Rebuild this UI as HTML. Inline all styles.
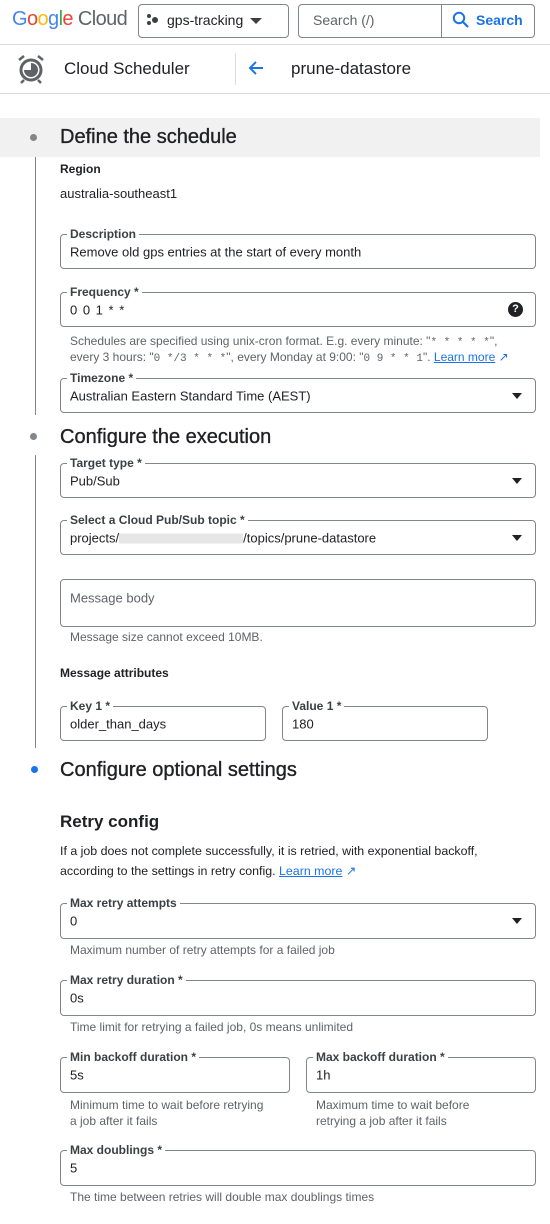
<!DOCTYPE html>
<html><head><meta charset="utf-8"><style>
*{box-sizing:border-box;margin:0;padding:0}
body{width:550px;height:1224px;background:#fff;font-family:"Liberation Sans",Arial,sans-serif;color:#202124;position:relative;overflow:hidden}
.a{position:absolute;white-space:nowrap}
.f{position:absolute;border:1px solid #80868b;border-radius:4px;background:#fff}
.f .l{position:absolute;top:-9px;left:6px;padding:0 3px;background:#fff;font-size:12px;font-weight:bold;color:#3c4043;line-height:16px}
.f .v{position:absolute;left:9px;top:50%;transform:translateY(-50%);font-size:13px;color:#202124}
.tri{position:absolute;right:13px;top:50%;margin-top:-3px;width:0;height:0;border-left:5px solid transparent;border-right:5px solid transparent;border-top:6px solid #202124}
.h{font-size:12px;color:#5f6368}
.sec{font-size:20px;color:#202124;-webkit-text-stroke:0.35px #202124}
.dot{position:absolute;width:7px;height:7px;border-radius:50%;background:#80868b}
.vl{position:absolute;left:35px;width:1px;background:#80868b}
.lk{color:#1a73e8;text-decoration:underline}
.mono{font-family:"Liberation Mono",monospace;font-size:11px}
</style></head><body>
<div class="a" style="left:12px;top:8px;font-size:20px;letter-spacing:-0.6px"><span style="color:#4285f4">G</span><span style="color:#ea4335">o</span><span style="color:#fbbc04">o</span><span style="color:#4285f4">g</span><span style="color:#34a853">l</span><span style="color:#ea4335">e</span> <span style="color:#5f6368">Cloud</span></div>
<div class="a" style="left:138px;top:4px;width:151px;height:34px;border:1px solid #80868b;border-radius:4px"></div>
<div class="a" style="left:146px;top:13px;width:14px;height:14px"><svg width="14" height="14"><circle cx="3" cy="3" r="2" fill="#3c4043"/><circle cx="3" cy="10" r="2" fill="#3c4043"/><circle cx="9" cy="7" r="3" fill="#3c4043"/></svg></div>
<div class="a" style="left:167px;top:12px;font-size:14px;color:#202124">gps-tracking</div>
<div class="a" style="left:250px;top:18px;border-left:6px solid transparent;border-right:6px solid transparent;border-top:6px solid #3c4043"></div>
<div class="a" style="left:298px;top:4px;width:237px;height:34px;border:1px solid #80868b;border-radius:4px"></div>
<div class="a" style="left:441px;top:4px;width:1px;height:34px;background:#80868b"></div>
<div class="a" style="left:313px;top:12px;font-size:14px;color:#5f6368">Search (/)</div>
<div class="a" style="left:452px;top:11px"><svg width="18" height="18" viewBox="0 0 18 18"><circle cx="7" cy="7" r="5.2" fill="none" stroke="#1a73e8" stroke-width="2"/><path d="M11 11l5 5" stroke="#1a73e8" stroke-width="2.2"/></svg></div>
<div class="a" style="left:476px;top:12px;font-size:14px;font-weight:bold;color:#1a73e8">Search</div>
<div class="a" style="left:0;top:44px;width:550px;height:1px;background:#dadce0"></div>
<div class="a" style="left:16px;top:53px"><svg width="30" height="32" viewBox="0 0 30 32"><circle cx="15" cy="17" r="10" fill="none" stroke="#5f6368" stroke-width="3"/><path d="M15 17V10A7 7 0 1 1 8 17z" fill="#5f6368"/><path d="M3 7l5-4M27 7l-5-4M8 27l-3 3M22 27l3 3" stroke="#5f6368" stroke-width="2.5"/></svg></div>
<div class="a" style="left:64px;top:59px;font-size:17px">Cloud Scheduler</div>
<div class="a" style="left:235px;top:53px;width:1px;height:32px;background:#dadce0"></div>
<div class="a" style="left:247px;top:59px"><svg width="18" height="18" viewBox="0 0 18 18"><path d="M16 9H3M9 3L3 9l6 6" fill="none" stroke="#1a73e8" stroke-width="2"/></svg></div>
<div class="a" style="left:291px;top:59px;font-size:17px">prune-datastore</div>
<div class="a" style="left:0;top:93px;width:550px;height:1px;background:#dadce0"></div>

<div class="a" style="left:0;top:118px;width:540px;height:39px;background:#f1f1f1"></div>
<div class="dot" style="left:30px;top:134px"></div>
<div class="a sec" style="left:60px;top:126px">Define the schedule</div>
<div class="vl" style="top:157px;height:258px"></div>
<div class="a" style="left:60px;top:162px;font-size:12px;font-weight:bold">Region</div>
<div class="a" style="left:60px;top:186px;font-size:13px">australia-southeast1</div>

<div class="f" style="left:60px;top:234px;width:476px;height:35px"><div class="l">Description</div><div class="v">Remove old gps entries at the start of every month</div></div>
<div class="f" style="left:60px;top:292px;width:476px;height:35px"><div class="l">Frequency *</div><div class="v" style="letter-spacing:1px">0 0 1 * *</div>
<div style="position:absolute;right:12px;top:9px;width:15px;height:15px;border-radius:50%;background:#202124;color:#fff;font-size:11px;font-weight:bold;text-align:center;line-height:15px">?</div></div>
<div class="a h" style="left:70px;top:334px">Schedules are specified using unix-cron format. E.g. every minute: "<span class="mono">* * * * *</span>",</div>
<div class="a h" style="left:70px;top:350px">every 3 hours: "<span class="mono">0 */3 * * *</span>", every Monday at 9:00: "<span class="mono">0 9 * * 1</span>". <span class="lk">Learn more</span> <span style="color:#1a73e8">↗</span></div>
<div class="f" style="left:60px;top:378px;width:476px;height:35px"><div class="l">Timezone *</div><div class="v">Australian Eastern Standard Time (AEST)</div><div class="tri"></div></div>

<div class="dot" style="left:30px;top:433px"></div>
<div class="a sec" style="left:60px;top:426px">Configure the execution</div>
<div class="vl" style="top:455px;height:293px"></div>
<div class="f" style="left:60px;top:463px;width:476px;height:35px"><div class="l">Target type *</div><div class="v">Pub/Sub</div><div class="tri"></div></div>
<div class="f" style="left:60px;top:520px;width:476px;height:35px"><div class="l">Select a Cloud Pub/Sub topic *</div><div class="v">projects/<span style="display:inline-block;width:124px;height:10px;background:#e6e6e6;vertical-align:middle"></span>/topics/prune-datastore</div><div class="tri"></div></div>
<div class="f" style="left:60px;top:579px;width:476px;height:48px"><div class="v" style="top:18px;color:#5f6368">Message body</div></div>
<div class="a h" style="left:70px;top:630px">Message size cannot exceed 10MB.</div>
<div class="a" style="left:60px;top:666px;font-size:12px;font-weight:bold">Message attributes</div>
<div class="f" style="left:60px;top:706px;width:206px;height:35px"><div class="l">Key 1 *</div><div class="v">older_than_days</div></div>
<div class="f" style="left:282px;top:706px;width:206px;height:35px"><div class="l">Value 1 *</div><div class="v">180</div></div>

<div class="dot" style="left:31px;top:766px;background:#1a73e8"></div>
<div class="a sec" style="left:60px;top:759px">Configure optional settings</div>
<div class="a" style="left:60px;top:812px;font-size:17px;font-weight:bold;color:#202124">Retry config</div>
<div class="a" style="left:60px;top:844px;font-size:12.4px">If a job does not complete successfully, it is retried, with exponential backoff,</div>
<div class="a" style="left:60px;top:863px;font-size:12.4px">according to the settings in retry config. <span class="lk">Learn more</span> <span style="color:#1a73e8">↗</span></div>
<div class="f" style="left:60px;top:903px;width:476px;height:36px"><div class="l">Max retry attempts</div><div class="v">0</div><div class="tri"></div></div>
<div class="a h" style="left:70px;top:943px">Maximum number of retry attempts for a failed job</div>
<div class="f" style="left:60px;top:980px;width:476px;height:36px"><div class="l">Max retry duration *</div><div class="v">0s</div></div>
<div class="a h" style="left:70px;top:1020px">Time limit for retrying a failed job, 0s means unlimited</div>
<div class="f" style="left:60px;top:1057px;width:230px;height:36px"><div class="l">Min backoff duration *</div><div class="v">5s</div></div>
<div class="f" style="left:306px;top:1057px;width:230px;height:36px"><div class="l">Max backoff duration *</div><div class="v">1h</div></div>
<div class="a h" style="left:70px;top:1097px;line-height:16px">Minimum time to wait before retrying<br>a job after it fails</div>
<div class="a h" style="left:316px;top:1097px;line-height:16px">Maximum time to wait before<br>retrying a job after it fails</div>
<div class="f" style="left:60px;top:1150px;width:476px;height:36px"><div class="l">Max doublings *</div><div class="v">5</div></div>
<div class="a h" style="left:70px;top:1190px">The time between retries will double max doublings times</div>
</body></html>
